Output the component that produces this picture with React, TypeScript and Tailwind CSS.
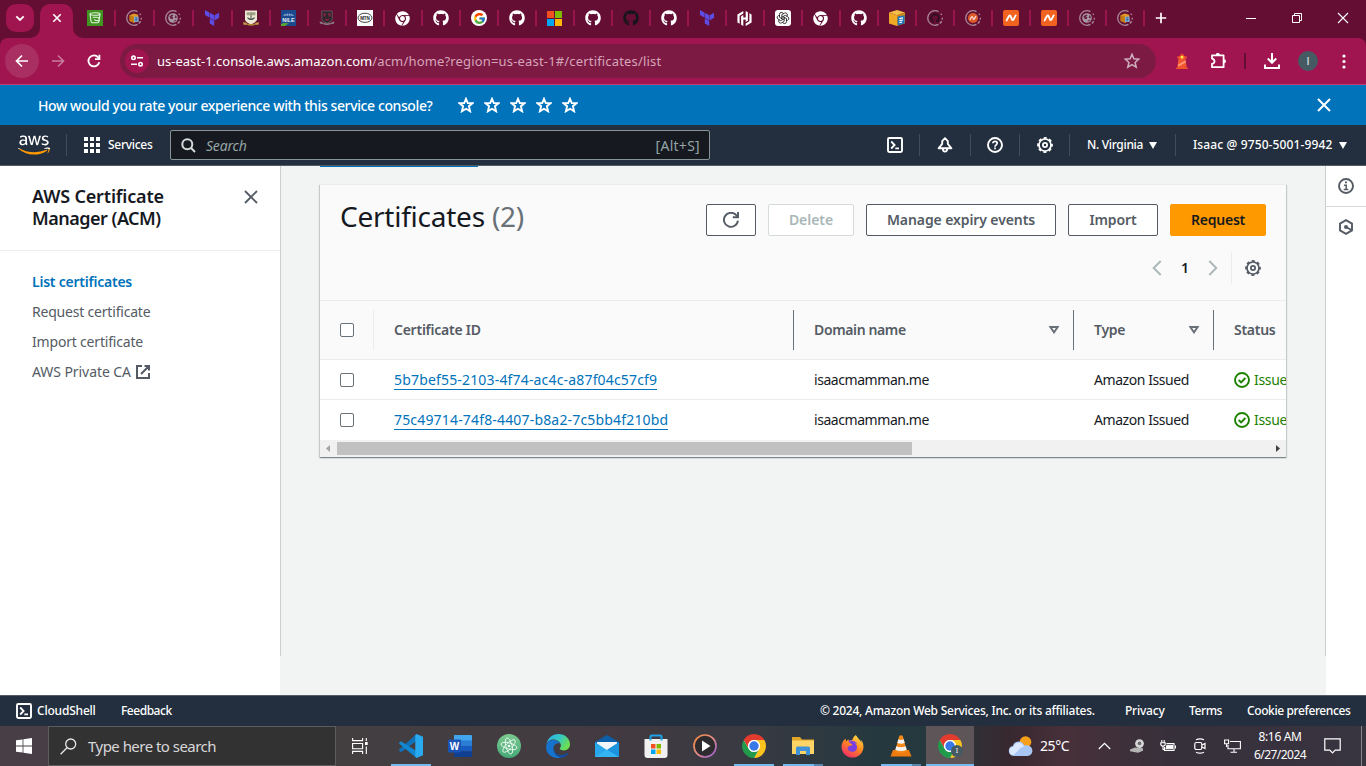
import type { ReactNode } from 'react'
import { FaAws, FaChrome, FaFirefoxBrowser, FaGithub } from 'react-icons/fa'
import { FcGoogle } from 'react-icons/fc'
import { SiHashicorp, SiTerraform } from 'react-icons/si'
import { TbBrandOpenai } from 'react-icons/tb'

/* ---------- browser tab favicons ---------- */

function Ring({ children }: { children: ReactNode }) {
  return (
    <svg className="size-4" viewBox="0 0 16 16" fill="none">
      <circle cx="8" cy="8" r="7.3" stroke="#a98a9a" strokeWidth="1.3" strokeDasharray="3 1.600 3 1.600 3 1.600 30" strokeDashoffset="6" />
      {children}
    </svg>
  )
}

function GlobeRing() {
  return (
    <Ring>
      <circle cx="8" cy="8" r="4.8" fill="#a898a2" />
      <path d="M4.400 6.600Q5.500 4.600 7.600 4.400L8.600 5.400 7 6.600 8.400 7.600 7.600 9.200 5.400 8.800zM10.200 5l1.600 1.700-.5 1.700-1.500-.6zM8.200 11.200l2.600-1.600.3.900-1.400 1.100z" fill="#6b2347" />
    </Ring>
  )
}

function AwsBoxRing() {
  return (
    <Ring>
      <path d="M3.600 5.200L7.800 3.400l4.400 1.400v6.400l-4.200 1.600-4.400-1.800z" fill="#e39a25" />
      <path d="M3.600 5.200l4.200 1.400v6.200l-4.200-1.800z" fill="#c47a12" />
      <rect x="8" y="6.600" width="4.600" height="5.400" fill="#7fa9d6" />
      <path d="M9.300 8h2M9.300 9.400h2M9.300 10.800h1.400" stroke="#1f4f86" strokeWidth=".8" />
    </Ring>
  )
}

function AwsBox() {
  return (
    <svg className="size-4" viewBox="0 0 16 16">
      <path d="M0 2.600L8 0l8 2.400-8 2.800z" fill="#f5c04a" />
      <path d="M0 2.600l8 2.600V16l-8-2.400z" fill="#f0a925" />
      <path d="M8 5.200l8-2.800v10.900L8 16z" fill="#d48a16" />
      <path d="M8.600 6.600l7-1.400v8.400l-7 1.800z" fill="#2275b8" />
      <path d="M10.400 8l3.600-.7v1.300l-3.600.7zM10.400 10.100l3.600-.7v1.200l-3.600.7zM10.400 12.100l2.600-.5v1.200l-2.600.5z" fill="#fff" />
    </svg>
  )
}

function Namecheap({ size }: { size: string }) {
  return (
    <svg className={size} viewBox="0 0 16 16">
      <rect width="16" height="16" rx="2" fill="#f1631f" />
      <path d="M3.600 10.400L6 6q.8-1.200 1.600 0l1.300 3.400q.8 1.300 1.600 0l2.200-4" fill="none" stroke="#fff" strokeWidth="1.900" strokeLinecap="round" strokeLinejoin="round" />
    </svg>
  )
}

function BucketGreen() {
  return (
    <svg className="size-4" viewBox="0 0 16 16" fill="none">
      <rect width="16" height="16" fill="#3f9321" />
      <ellipse cx="8" cy="4" rx="5" ry="1.300" stroke="#e8f5e2" strokeWidth="1.100" />
      <path d="M3 4.200l1.200 7.600q.1 1 1 1h5.600q.9 0 1-1L13 4.200M5.500 7.200H10q2 .2 2 2M7 9.700q3 1.500 5.800.9" stroke="#e8f5e2" strokeWidth="1.100" />
    </svg>
  )
}

function Crest() {
  return (
    <svg className="size-4" viewBox="0 0 16 16">
      <path d="M2 .6h12v8.600q0 3-6 5.200Q2 12.200 2 9.200z" fill="#ece8d2" />
      <path d="M3.600 2.200h3.600v3H3.600zM8.800 2.200h3.600v3H8.800z" fill="#a3a184" />
      <path d="M4.500 7q3.500 3 7 0v1.600q-3.500 3-7 0z" fill="#3b4a46" />
      <path d="M7.400 2.200h1.200v6H7.400z" fill="#66705e" />
      <path d="M0 12.200l3.400.6 1 2H.6zM16 12.200l-3.400.6-1 2h3.800z" fill="#c8a544" />
      <path d="M4.200 13.600q3.800 1.400 7.600 0v1.500q-3.800 1.200-7.600 0z" fill="#b08d2e" />
    </svg>
  )
}

function DarkCrest() {
  return (
    <svg className="size-4" viewBox="0 0 16 16">
      <path d="M2.800 1h10.400v8q0 2.600-5.200 4.200Q2.800 11.600 2.800 9z" fill="#2c2529" stroke="#6d6067" strokeWidth=".8" />
      <path d="M4.400 3h2.400v3.400H4.400zM9.200 3h2.400v3.400H9.200z" fill="#7b2343" />
      <path d="M6 8.200q2 1.400 4 0v2q-2 1.200-4 0z" fill="#7b2343" />
      <path d="M.6 11.400l2.800.8 1 2-3.400-.6zM15.400 11.400l-2.800.8-1 2 3.400-.6zM4.400 12.800q3.600 1.600 7.200 0v1.400q-3.600 1.400-7.200 0z" fill="#8c8388" />
    </svg>
  )
}

function Nile() {
  return (
    <svg className="h-4 w-[15px]" viewBox="0 0 15 16">
      <rect width="15" height="16" fill="#1c4a8f" />
      <path d="M2 5.800C4 2.600 11 2.600 13 5.800z" fill="#8fabd4" />
      <path d="M5.300 3v3M7.500 2.600v3.400M9.700 3v3" stroke="#1c4a8f" strokeWidth=".6" />
      <text x="7.500" y="11.800" textAnchor="middle" className="font-['Liberation_Sans'] text-[5.500px] font-bold" fill="#e6ecf5">NILE</text>
      <path d="M0 16v-2q3-1.600 8-.6Q5 14.600 4 16z" fill="#5aa832" />
    </svg>
  )
}

function Mtn() {
  return (
    <svg className="size-4" viewBox="0 0 16 16">
      <rect width="16" height="16" fill="#fbfbfb" />
      <ellipse cx="8" cy="7.800" rx="7" ry="4.600" fill="none" stroke="#333" strokeWidth=".9" />
      <text x="8" y="9.500" textAnchor="middle" className="font-['Liberation_Sans'] text-[4.500px] font-bold" fill="#222">MTN</text>
    </svg>
  )
}

function Microsoft({ className }: { className: string }) {
  return (
    <svg className={className} viewBox="0 0 15 15">
      <path d="M0 0h7v7H0z" fill="#f35022" />
      <path d="M8 0h7v7H8z" fill="#80bb03" />
      <path d="M0 8h7v7H0z" fill="#02a5f0" />
      <path d="M8 8h7v7H8z" fill="#ffb902" />
    </svg>
  )
}

const gh = <FaGithub className="size-4 text-white" />
const chromeWhite = <FaChrome className="size-[15px] text-white" />
const terraform = <SiTerraform className="size-4 text-[#5c4ee5]" />

const tabs: { icon: ReactNode; wide?: boolean }[] = [
  { icon: <BucketGreen />, wide: true },
  { icon: <AwsBoxRing />, wide: true },
  { icon: <GlobeRing />, wide: true },
  { icon: terraform, wide: true },
  { icon: <Crest /> },
  { icon: <Nile /> },
  { icon: <DarkCrest /> },
  { icon: <Mtn /> },
  { icon: chromeWhite },
  { icon: gh },
  { icon: <span className="flex size-4 items-center justify-center rounded-full bg-white"><FcGoogle className="size-[13px]" /></span> },
  { icon: gh },
  { icon: <Microsoft className="size-[15px]" /> },
  { icon: gh },
  { icon: <FaGithub className="size-4 text-[#17141a]" /> },
  { icon: gh },
  { icon: terraform },
  { icon: <SiHashicorp className="size-[15px] text-white" /> },
  { icon: <span className="flex size-4 items-center justify-center rounded-[3px] bg-white"><TbBrandOpenai className="size-[14px] text-[#222] [&_path]:stroke-[1.500]" /></span> },
  { icon: chromeWhite },
  { icon: gh },
  { icon: <AwsBox /> },
  { icon: <Ring><FaGithub x="3" y="3" size={10} color="#2b0f20" /></Ring> },
  { icon: <Ring><circle cx="8" cy="8" r="5" fill="#dd5a2a" /><path d="M5.200 9.500l1.300-2.600q.5-.7 1 0l.9 2q.5.700 1 0l1.400-2.500" stroke="#f4d9cf" strokeWidth="1.300" strokeLinecap="round" /></Ring> },
  { icon: <Namecheap size="size-4" /> },
  { icon: <Namecheap size="size-4" /> },
  { icon: <GlobeRing /> },
  { icon: <AwsBoxRing /> },
]

function TabStrip() {
  return (
    <div className="flex h-[38px] bg-[#650e33]">
      <div className="flex w-10 pl-1.5 pt-1">
        <span className="flex size-7 items-center justify-center rounded-[10px] bg-[#a0154f]">
          <svg className="size-3" viewBox="0 0 12 12" fill="none" stroke="#fff" strokeWidth="1.800"><path d="M2.300 4.300L6 8l3.700-3.700" /></svg>
        </span>
      </div>
      <div className="relative mt-1 flex h-[34px] w-[33px] justify-center rounded-t-[10px] bg-[#a0154f]">
        <svg className="mt-[9px] size-[10px]" viewBox="0 0 10 10" stroke="#fff" strokeWidth="1.600"><path d="M1.300 1.300l7.400 7.400M8.700 1.300L1.300 8.700" /></svg>
        <svg className="absolute -left-[10px] bottom-0 size-[10px]" viewBox="0 0 10 10" fill="#a0154f"><path d="M10 0v10H0A10 10 0 0 0 10 0z" /></svg>
        <svg className="absolute -right-[10px] bottom-0 size-[10px]" viewBox="0 0 10 10" fill="#a0154f"><path d="M0 0v10h10A10 10 0 0 1 0 0z" /></svg>
      </div>
      <div className="ml-1 flex pt-[10px]">
        {tabs.map((t, i) => (
          <div key={i} className={`flex h-4 items-center border-r-2 border-[#97154c] pl-[10px] ${t.wide ? 'w-[39px]' : 'w-[38px]'}`}>{t.icon}</div>
        ))}
      </div>
      <svg className="ml-[10px] mt-3 size-3 shrink-0" viewBox="0 0 12 12" stroke="#fff" strokeWidth="1.700"><path d="M6 .8v10.400M.8 6h10.400" /></svg>
      <div className="ml-auto flex items-center pb-[2px] pr-[17px] text-white">
        <svg className="size-3" viewBox="0 0 12 12" stroke="currentColor"><path d="M1 6.500h10" /></svg>
        <svg className="ml-[34px] size-3" viewBox="0 0 12 12" fill="none" stroke="currentColor"><path d="M1.500 3.500h7v7h-7zM3.500 3.500v-2h7v7h-2" /></svg>
        <svg className="ml-[34px] size-3" viewBox="0 0 12 12" stroke="currentColor" strokeWidth="1.100"><path d="M1 1l10 10M11 1L1 11" /></svg>
      </div>
    </div>
  )
}

function Toolbar() {
  return (
    <div className="bg-[#650e33]">
      <div className="flex h-[46px] items-center rounded-t-lg bg-[#a0154f] pl-[5px] text-white">
        <span className="flex size-[34px] items-center justify-center rounded-full bg-[#a92e62]">
          <svg className="size-[14px]" viewBox="0 0 14 14" fill="none" stroke="currentColor" strokeWidth="1.700"><path d="M13 7H2M7 1.500L1.500 7 7 12.500" /></svg>
        </span>
        <svg className="ml-3 size-[14px] text-[#c77c9d]" viewBox="0 0 14 14" fill="none" stroke="currentColor" strokeWidth="1.600"><path d="M1 7h11M7 1.500L12.500 7 7 12.500" /></svg>
        <svg className="ml-[22px] size-[14px]" viewBox="0 0 14 14" fill="none" stroke="currentColor" strokeWidth="1.800"><path d="M12.300 8.200A5.500 5.500 0 1 1 11.200 3.400L12.500 4.800" /><path d="M12.400 .8v4.400H8" /></svg>
        <div className="ml-[19px] flex h-[34px] w-[1036px] items-center rounded-full bg-[#7d1a44] pl-[5px] pr-4 font-['Noto_Sans',sans-serif] text-[13px]">
          <span className="flex size-6 items-center justify-center rounded-full bg-[#a0154f]">
            <svg className="size-[14px]" viewBox="0 0 14 14" fill="none" stroke="currentColor" strokeWidth="1.600"><circle cx="3.500" cy="3.800" r="1.700" /><path d="M7 3.800h6M1 10.200h6" /><circle cx="10.500" cy="10.200" r="1.700" /></svg>
          </span>
          <span className="ml-2 mt-[2px] whitespace-nowrap">us-east-1.console.aws.amazon.com</span>
          <span className="mt-[2px] whitespace-nowrap tracking-[0.17px] text-[#d5a5b9]">/acm/home?region=us-east-1#/certificates/list</span>
          <svg className="ml-auto size-4 text-[#cfb1bf]" viewBox="0 0 16 16" fill="none" stroke="currentColor" strokeWidth="1.500"><path d="M8 1.300l1.900 4.500 4.800.4-3.600 3.200 1.100 4.800L8 11.700l-4.200 2.500 1.100-4.800L1.300 6.200l4.800-.4z" /></svg>
        </div>
        <svg className="ml-[19px] h-4 w-[14px]" viewBox="0 0 14 16">
          <path d="M4 3.500L7 .2l3 3.300h1.800v1.800h-1.300l1.200 9.400H13V16H1v-1.300h1.300l1.200-9.400H2.200V3.500z" fill="#f2542d" />
          <path d="M3 11.400L10.600 7.400l.3 2-8 4.400z" fill="#ff9a78" /><rect x="5.700" y="3" width="2.600" height="2.500" fill="#ffe14a" />
        </svg>
        <svg className="ml-[21px] h-[18px] w-[17px]" viewBox="0 0 17 18" fill="none" stroke="currentColor" strokeWidth="1.800"><path d="M2 3.400h11.600v11.800H2v-3.200q2.500-.6 2.500-2.700T2 6.600z" strokeLinejoin="round" /><path d="M5.800 3a2 2 0 0 1 4 0zM14 7.300a2 2 0 0 1 0 4z" fill="currentColor" stroke="none" /><path d="M6 2.500q1.800-1.800 3.600 0z" fill="currentColor" strokeWidth="1" /></svg>
        <span className="ml-[17px] h-4 w-[2px] bg-[#650e33]" />
        <svg className="ml-[18px] size-4" viewBox="0 0 16 16" fill="none" stroke="currentColor" strokeWidth="2"><path d="M8 0v9M3.800 5.500L8 9.800l4.200-4.300M1 11.500V15h14v-3.500" /></svg>
        <span className="ml-[18px] flex size-5 items-center justify-center rounded-full bg-[#465a64] font-['Liberation_Sans',sans-serif] text-[11px] text-[#e4eaec]">I</span>
        <svg className="ml-[24px] h-[15px] w-1" viewBox="0 0 4 15" fill="currentColor"><circle cx="2" cy="2" r="1.600" /><circle cx="2" cy="7.500" r="1.600" /><circle cx="2" cy="13" r="1.600" /></svg>
      </div>
    </div>
  )
}

/* ---------- AWS console ---------- */

function Cross({ className, width }: { className: string; width: number }) {
  return <svg className={className} viewBox="0 0 14 14" stroke="currentColor" strokeWidth={width}><path d="M1 1l12 12M13 1L1 13" /></svg>
}

function Gear({ className }: { className: string }) {
  return (
    <svg className={className} viewBox="0 0 16 16" fill="none" stroke="currentColor">
      <circle cx="8" cy="8" r="7" strokeWidth="1.800" strokeDasharray="3 2.498" strokeDashoffset="1.500" />
      <circle cx="8" cy="8" r="6" strokeWidth="1.700" />
      <circle cx="8" cy="8" r="2.100" strokeWidth="1.800" />
    </svg>
  )
}

function ShellIcon() {
  return (
    <svg className="size-4" viewBox="0 0 16 16" fill="none" stroke="currentColor" strokeWidth="1.900"><rect x="1" y="1" width="14" height="14" rx="1.200" /><path d="M4.200 4.500L7.600 8l-3.400 3.500M8.300 11.300h3.700" strokeWidth="1.800" /></svg>
  )
}

function SurveyBar() {
  return (
    <div className="flex h-[41px] items-center border-t border-[#bd3f74] bg-[#0073bb] pl-[38px] pr-[36px] text-white">
      <span className="w-[395px] whitespace-nowrap text-[14px] font-medium tracking-[-0.39px]">How would you rate your experience with this service console?</span>
      <div className="ml-[25px] flex gap-[10px]">
        {[0, 1, 2, 3, 4].map((i) => (
          <svg key={i} className="size-4" viewBox="0 0 16 16" fill="none" stroke="currentColor" strokeWidth="1.900"><path d="M8 1.800l1.800 4.300 4.700.1-3.600 3 1.200 5.100L8 11.800l-4.100 2.500 1.200-5.100-3.600-3 4.700-.1z" /></svg>
        ))}
      </div>
      <Cross className="ml-auto mr-[-1px] size-[14px]" width={2} />
    </div>
  )
}

function Divider() {
  return <span className="h-[22px] w-px shrink-0 bg-[#414d5c]" />
}

function Caret({ className }: { className: string }) {
  return <svg className={`h-[7px] w-[8px] shrink-0 ${className}`} viewBox="0 0 8 7" fill="currentColor"><path d="M0 0h8L4 7z" /></svg>
}

function TopNav() {
  return (
    <div className="flex h-[41px] items-center border-b border-[#545b64] bg-[#232f3e] text-[12px] font-medium text-white">
      <svg className="size-0"><linearGradient id="awsFill" gradientUnits="userSpaceOnUse" x1="0" y1="0" x2="0" y2="512"><stop offset=".64" stopColor="#fff" /><stop offset=".64" stopColor="#ff9900" /></linearGradient></svg>
      <FaAws className="ml-[18px] h-[26px] w-8 [&_path]:fill-[url(#awsFill)]" />
      <span className="ml-4" /><Divider />
      <svg className="ml-[17px] size-4" viewBox="0 0 16 16" fill="currentColor"><path d="M0 0h4v4H0zM6 0h4v4H6zM12 0h4v4h-4zM0 6h4v4H0zM6 6h4v4H6zM12 6h4v4h-4zM0 12h4v4H0zM6 12h4v4H6zM12 12h4v4h-4z" /></svg>
      <span className="ml-[8px] w-[45px] whitespace-nowrap tracking-[-0.280px]">Services</span>
      <div className="ml-[17px] flex h-[30px] w-[540px] items-center rounded-[2px] border border-[#879596] bg-[#16191f] pl-[10px] pr-[9px] text-[14px] font-normal text-[#95a5a6]">
        <svg className="size-[15px] text-[#d5dbdb]" viewBox="0 0 15 15" fill="none" stroke="currentColor" strokeWidth="2"><circle cx="6.300" cy="6.300" r="5" /><path d="M9.800 9.800l4.200 4.200" /></svg>
        <span className="ml-[10px] italic tracking-[-0.200px]">Search</span>
        <span className="ml-auto tracking-[0.280px]">[Alt+S]</span>
      </div>
      <div className="ml-[177px] flex items-center"><ShellIcon /></div>
      <span className="w-4" /><Divider />
      <svg className="ml-[17px] size-4" viewBox="0 0 16 16" fill="none" stroke="currentColor" strokeWidth="1.900"><path d="M8 1.200L5.200 4.200V6.800L1.600 11.300h12.800l-3.600-4.500V4.200zM5.800 12.200q.4 2.400 2.200 2.400t2.200-2.400" strokeLinejoin="round" /></svg>
      <span className="w-[17px]" /><Divider />
      <svg className="ml-4 size-4" viewBox="0 0 16 16" fill="none" stroke="currentColor" strokeWidth="1.900"><circle cx="8" cy="8" r="7" /><path d="M5.800 6.300c0-2.600 4.400-2.600 4.400 0C10.200 7.800 8 7.900 8 9.800M8 10.600v1.700" strokeWidth="1.700" /></svg>
      <span className="w-4" /><Divider />
      <Gear className="ml-[17px] size-4" />
      <span className="w-4" /><Divider />
      <span className="ml-[17px] w-[56px] whitespace-nowrap tracking-[-0.320px]">N. Virginia</span>
      <Caret className="ml-[6px]" />
      <span className="w-[18px]" /><Divider />
      <span className="ml-[17px] w-[140px] whitespace-nowrap tracking-[0.120px]">Isaac @ 9750-5001-9942</span>
      <Caret className="ml-[6px]" />
    </div>
  )
}

function SideNav() {
  return (
    <div className="w-[280px] shrink-0 bg-white">
      <div className="flex h-[85px] justify-between border-b border-[#eaeded] pl-8 pr-[22px] pt-5">
        <div className="-mt-px text-[18px] font-semibold leading-[22px] text-[#16191f]">
          <div className="whitespace-nowrap tracking-[-0.170px]">AWS Certificate</div>
          <div className="whitespace-nowrap tracking-[-0.500px]">Manager (ACM)</div>
        </div>
        <Cross className="mt-[4px] size-[14px] text-[#545b64]" width={1.900} />
      </div>
      <div className="pl-8 pt-4 text-[14px] leading-[30px] text-[#545b64]">
        <div className="font-semibold tracking-[-0.230px] text-[#0073bb]">List certificates</div>
        <div className="tracking-[-0.200px]">Request certificate</div>
        <div className="tracking-[-0.190px]">Import certificate</div>
        <div className="flex items-center"><span className="w-[104px] tracking-[-0.070px]">AWS Private CA</span>
          <svg className="size-[14px]" viewBox="0 0 14 14" fill="none" stroke="currentColor" strokeWidth="2"><path d="M6 1H1v12h12V8M8.500 1H13v4.500M13 1L5 9" /></svg>
        </div>
      </div>
    </div>
  )
}

function Check() {
  return <span className="block size-[14px] rounded-[2px] border border-[#687078] bg-white" />
}

function SortIcon() {
  return <svg className="ml-auto mr-[14px] h-[8px] w-[10px] text-[#687078]" viewBox="0 0 10 8" fill="none" stroke="currentColor" strokeWidth="1.900"><path d="M1.300 1h7.400L5 6.400z" /></svg>
}

const rows = [
  { id: '5b7bef55-2103-4f74-ac4c-a87f04c57cf9', domain: 'isaacmamman.me', type: 'Amazon Issued', status: 'Issued' },
  { id: '75c49714-74f8-4407-b8a2-7c5bb4f210bd', domain: 'isaacmamman.me', type: 'Amazon Issued', status: 'Issued' },
]

const btn = 'flex h-8 items-center justify-center whitespace-nowrap rounded-[2px] border pb-px text-[14px] font-semibold'

function CertificatesCard() {
  return (
    <div className="mt-[17px] h-[273px] w-[966px] overflow-hidden border-t border-[#eaeded] bg-white shadow-[0_1px_1px_0_rgba(0,28,36,.3),1px_1px_1px_0_rgba(0,28,36,.15),-1px_1px_1px_0_rgba(0,28,36,.15)]">
      <div className="h-[116px] border-b border-[#eaeded] bg-[#fafafa] px-5 pt-[19px]">
        <div className="flex gap-3">
          <h1 className="mr-auto mt-[-5px] whitespace-nowrap text-[28px] leading-[34px] tracking-[-0.240px] text-[#16191f]">Certificates <span className="text-[#687078]">(2)</span></h1>
          <div className={`${btn} w-[50px] border-[#545b64] bg-white text-[#545b64]`}>
            <svg className="mt-px size-4" viewBox="0 0 16 16" fill="none" stroke="currentColor" strokeWidth="1.900"><path d="M14.900 8.600A7 7 0 1 1 13.200 3.200L15 5.200" /><path d="M15 0v5.200H9.800" /></svg>
          </div>
          <div className={`${btn} w-[86px] border-[#d5dbdb] bg-white tracking-[-0.050px] text-[#aab7b8]`}>Delete</div>
          <div className={`${btn} w-[190px] border-[#545b64] bg-white tracking-[-0.100px] text-[#545b64]`}>Manage expiry events</div>
          <div className={`${btn} w-[90px] border-[#545b64] bg-white tracking-[-0.150px] text-[#545b64]`}>Import</div>
          <div className={`${btn} w-24 border-[#ff9900] bg-[#ff9900] tracking-[-0.220px] text-[#16191f]`}>Request</div>
        </div>
        <div className="mt-4 flex h-8 items-center justify-end text-[#aab7b8]">
          <svg className="h-4 w-[10px]" viewBox="0 0 10 16" fill="none" stroke="currentColor" strokeWidth="1.900"><path d="M8.700 1L1.700 8l7 7" /></svg>
          <span className="mx-[19px] w-2 pb-px text-center text-[14px] font-semibold text-[#16191f]">1</span>
          <svg className="h-4 w-[10px]" viewBox="0 0 10 16" fill="none" stroke="currentColor" strokeWidth="1.900"><path d="M1.300 1l7 7-7 7" /></svg>
          <span className="ml-[13px] mr-[13px] h-8 w-px bg-[#eaeded]" />
          <Gear className="mr-[5px] size-4 text-[#545b64]" />
        </div>
      </div>
      <div className="grid h-[59px] w-[1100px] grid-cols-[54px_420px_280px_140px_206px] items-center border-b border-[#eaeded] bg-[#fafafa] text-[14px] font-semibold leading-10 text-[#545b64]">
        <div className="flex h-10 items-center border-r border-[#eaeded] pl-5"><Check /></div>
        <div className="h-10 border-r border-[#687078] pl-5 tracking-[-0.250px]">Certificate ID</div>
        <div className="flex h-10 items-center border-r border-[#687078] pl-5 tracking-[-0.370px]">Domain name<SortIcon /></div>
        <div className="flex h-10 items-center border-r border-[#687078] pl-5 tracking-[-0.250px]">Type<SortIcon /></div>
        <div className="pl-5 tracking-[-0.280px]">Status</div>
      </div>
      {rows.map((r, i) => (
        <div key={r.id} className={`grid h-10 w-[1100px] grid-cols-[54px_420px_280px_140px_206px] items-center border-b text-[14px] text-[#16191f] ${i === 0 ? 'border-[#eaeded]' : 'border-white'}`}>
          <div className="pl-5"><Check /></div>
          <div className="pl-5"><span className="inline-block whitespace-nowrap border-b border-[#0073bb] leading-[18px] tracking-[0.170px] text-[#0073bb]">{r.id}</span></div>
          <div className="pl-5 tracking-[-0.440px]">{r.domain}</div>
          <div className="pl-5 tracking-[-0.430px]">{r.type}</div>
          <div className="flex items-center pl-5 tracking-[-0.300px] text-[#1d8102]">
            <svg className="mr-1 size-4" viewBox="0 0 16 16" fill="none" stroke="currentColor" strokeWidth="1.900"><circle cx="8" cy="8" r="7" /><path d="M4.700 8l2.400 2.500L11.400 6" /></svg>
            {r.status}
          </div>
        </div>
      ))}
      <div className="flex h-[17px] items-center bg-[#f1f1f1] px-[6px]">
        <svg className="h-[7px] w-[4px]" viewBox="0 0 4 7" fill="#a3a3a3"><path d="M4 0v7L0 3.500z" /></svg>
        <span className="ml-[7px] h-[13px] w-[575px] bg-[#c1c1c1]" />
        <svg className="ml-auto h-[7px] w-[4px]" viewBox="0 0 4 7" fill="#404040"><path d="M0 0v7l4-3.500z" /></svg>
      </div>
    </div>
  )
}

function Content() {
  return (
    <div className="flex h-[529px] bg-white">
      <SideNav />
      <div className="flex w-[1046px] shrink-0 bg-[#f2f3f3]">
        <div className="h-[490px] w-px bg-[#c9cfd0]" />
        <div className="ml-[39px]">
          <div className="h-px w-[158px] bg-[#0073bb]" />
          <CertificatesCard />
        </div>
        <div className="ml-auto h-[490px] w-px bg-[#c9cfd0]" />
      </div>
      <div className="flex flex-1 flex-col items-center text-[#545b64]">
        <div className="flex h-[41px] w-full items-center justify-center border-b border-[#d5dbdb]">
          <svg className="size-4" viewBox="0 0 16 16" fill="none" stroke="currentColor" strokeWidth="1.900"><circle cx="8" cy="8" r="7" /><path d="M7 3.500h2v1.800H7z" fill="currentColor" stroke="none" /><path d="M6 7.300h2.200v4M5.700 11.600h4.600" strokeWidth="1.500" /></svg>
        </div>
        <svg className="mt-3 size-4" viewBox="0 0 16 16" fill="none" stroke="currentColor" strokeWidth="1.900"><path d="M8 1.200l6 3.400v6.800l-6 3.400-6-3.400V4.600z" /><circle cx="8" cy="8" r="2" fill="currentColor" stroke="none" /><path d="M8 8l5.500 3" /></svg>
      </div>
    </div>
  )
}

function Footer() {
  return (
    <div className="flex h-[31px] items-center whitespace-nowrap border-t border-[#545b64] bg-[#232f3e] pl-4 text-[12px] font-medium text-white">
      <ShellIcon />
      <span className="ml-[5px] w-[84px] tracking-[-0.200px]">CloudShell</span>
      <span className="tracking-[-0.480px]">Feedback</span>
      <span className="ml-auto w-[305px] tracking-[-0.240px]">© 2024, Amazon Web Services, Inc. or its affiliates.</span>
      <span className="w-[64px] tracking-[-0.220px]">Privacy</span>
      <span className="w-[58px] tracking-[-0.410px]">Terms</span>
      <span className="w-[119px] tracking-[-0.390px]">Cookie preferences</span>
    </div>
  )
}

/* ---------- desktop taskbar ---------- */

function ChromeColor() {
  const d = 'M12 6h10.390A12 12 0 0 0 1.610 6L6.800 15A6 6 0 0 1 12 6z'
  return (
    <svg className="size-6" viewBox="0 0 24 24">
      <circle cx="12" cy="12" r="11" fill="#fff" />
      <path d={d} fill="#e33b2e" />
      <path d={d} fill="#fcc31e" transform="rotate(120 12 12)" />
      <path d={d} fill="#229a4b" transform="rotate(240 12 12)" />
      <circle cx="12" cy="12" r="5.900" fill="#fff" /><circle cx="12" cy="12" r="4.700" fill="#3b78e7" />
    </svg>
  )
}

function VsCode() {
  return (
    <svg className="size-6" viewBox="0 0 24 24">
      <path d="M17.500 0v7L2 18.300.2 16.900v-1.300z" fill="#0f72b8" />
      <path d="M.2 8.500L2 7.300 17.500 17v7L.2 9.800z" fill="#1286cf" />
      <path d="M17.500 0L24 2.800v18.400L17.500 24l-1.200-1.200V1.200z" fill="#29a9f0" />
    </svg>
  )
}

function Word() {
  return (
    <svg className="h-[22px] w-6" viewBox="0 0 24 22">
      <path d="M6 0h17q1 0 1 1v5H6z" fill="#41a5ee" /><path d="M6 5.500h18V11H6z" fill="#2b7cd3" /><path d="M6 11h18v5.500H6z" fill="#185abd" /><path d="M6 16.500h18V21q0 1-1 1H6z" fill="#103f91" />
      <rect y="4.500" width="13" height="13" rx="1" fill="#1b52b5" />
      <text x="6.500" y="14.600" textAnchor="middle" className="font-['Liberation_Sans'] text-[10px] font-bold" fill="#fff">W</text>
    </svg>
  )
}

function Atom() {
  return (
    <svg className="size-6" viewBox="0 0 24 24">
      <linearGradient id="atomBg" x1="0" y1="0" x2="0" y2="1"><stop stopColor="#7cc98f" /><stop offset="1" stopColor="#45a877" /></linearGradient>
      <circle cx="12" cy="12" r="12" fill="url(#atomBg)" />
      <g fill="none" stroke="#eef8f1" strokeWidth=".9"><ellipse cx="12" cy="12" rx="8.300" ry="3.100" transform="rotate(15 12 12)" /><ellipse cx="12" cy="12" rx="8.300" ry="3.100" transform="rotate(75 12 12)" /><ellipse cx="12" cy="12" rx="8.300" ry="3.100" transform="rotate(135 12 12)" /></g>
      <circle cx="12" cy="12" r="1.300" fill="#fff" />
    </svg>
  )
}

function Edge() {
  return (
    <svg className="size-6" viewBox="0 0 24 24">
      <linearGradient id="edgeTop" x1="0" x2="1" y1="0" y2=".5"><stop offset=".1" stopColor="#2ab4e8" /><stop offset=".55" stopColor="#36c8c4" /><stop offset="1" stopColor="#6cdf4f" /></linearGradient>
      <path d="M.3 11C1.500 3.500 7 0 12.200 0 19.500 0 24 5 24 10.300c0 4-3 6.200-6 6.200-2.600 0-4.300-1-4.300-1.900 0-.7 1.200-1.200 1.200-3.100C14.900 8 11 5.600 7.200 5.600 3.500 5.600 1 8 .3 11z" fill="url(#edgeTop)" />
      <path d="M.1 12.500C.6 8 3.600 6 7.200 6c3 0 6 1.500 7 3.800-1-.9-3.600-.9-5.200.8-2.900 3.200-1.600 9.400 3.700 12.200.8.500 2 .8 2.600.9C7.500 25.400-.5 20.600.1 12.500z" fill="#1674cf" />
      <path d="M8.300 12c-1.300 5.500 2.400 9.300 7 9 2.700-.2 5-1.300 6.300-2.200.6-.3 1 .2.700.7-1.600 2.400-4.300 4-7.200 4.300C9.500 22.500 6.500 16.500 8.300 12z" fill="#134c9c" />
    </svg>
  )
}

function Mail() {
  return (
    <svg className="h-[22px] w-6" viewBox="0 0 24 22">
      <path d="M0 7L12 0l12 7v2H0z" fill="#0d5fa9" />
      <path d="M2 7h20v6L12 17 2 13z" fill="#f2f6fa" />
      <path d="M0 7l14 9.500L24 22H0z" fill="#28a8ea" /><path d="M24 7L11 15.500 24 22z" fill="#1c94dd" /><path d="M12 14.800L24 22H0z" fill="#35b5f2" />
    </svg>
  )
}

function Store() {
  return (
    <svg className="size-6" viewBox="0 0 24 24">
      <path d="M6.500 6V2.700q0-1.200 1.200-1.200h8.600q1.200 0 1.200 1.200V6" fill="none" stroke="#1da1e8" strokeWidth="2" />
      <path d="M.5 5h23v16q0 3-3 3h-17q-3 0-3-3z" fill="#f1f1f1" />
      <path d="M5.500 5h2v1.500h-2zM16.500 5h2v1.500h-2z" fill="#1da1e8" />
      <path d="M7 10h4.500v4.500H7z" fill="#f25022" /><path d="M12.500 10H17v4.500h-4.500z" fill="#7fba00" /><path d="M7 15.500h4.500V20H7z" fill="#00a4ef" /><path d="M12.500 15.500H17V20h-4.500z" fill="#ffb900" />
    </svg>
  )
}

function Media() {
  return (
    <svg className="size-6" viewBox="0 0 24 24">
      <linearGradient id="mediaRing" x1="0" y1="0" x2="1" y2="1"><stop stopColor="#f08a3c" /><stop offset=".5" stopColor="#e58b86" /><stop offset="1" stopColor="#8f5bd6" /></linearGradient>
      <circle cx="12" cy="12" r="11" fill="#2d2b2e" stroke="url(#mediaRing)" strokeWidth="1.700" /><path d="M9 6.500l8.500 5.500L9 17.500z" fill="#fff" />
    </svg>
  )
}

function Explorer() {
  return (
    <svg className="h-[20px] w-[22px]" viewBox="0 0 22 20">
      <path d="M0 1h8l2 2.500h12V18H0z" fill="#e0a526" /><path d="M0 4.500h22V18H0z" fill="#ffd467" />
      <path d="M4 19v-7q0-1.500 1.500-1.500h11q1.500 0 1.500 1.500v7h-4v-4H8v4z" fill="#3f92d8" />
    </svg>
  )
}

function Firefox() {
  return (
    <span className="flex">
      <svg className="size-0"><linearGradient id="ffFill" x1=".8" y1="0" x2=".2" y2="1"><stop stopColor="#ffe14a" /><stop offset=".45" stopColor="#ff8a1f" /><stop offset="1" stopColor="#f0246e" /></linearGradient></svg>
      <span className="flex size-6 items-center justify-center bg-[radial-gradient(circle_at_50%_54%,#7a3fe0_0_7px,transparent_7.500px)]">
        <FaFirefoxBrowser className="size-[23px] [&_path]:fill-[url(#ffFill)]" />
      </span>
    </span>
  )
}

function Vlc() {
  return (
    <svg className="size-[22px]" viewBox="0 0 22 22">
      <path d="M3 15h16l2.500 6.500H.5z" fill="#f07b0e" /><path d="M9.300.8q1.700-1 3.400 0L17 16.500q-6 3-12 0z" fill="#f58a1a" />
      <path d="M8.300 4.300q2.700 1.200 5.400 0l1 3.700q-3.700 1.400-7.400 0zM6.300 11.300q4.700 2 9.400 0l1 3.400q-5.700 2.400-11.400 0z" fill="#f4f4f4" />
    </svg>
  )
}

const apps: { icon: ReactNode; bar: string }[] = [
  { icon: <VsCode />, bar: 'one' },
  { icon: <Word />, bar: '' },
  { icon: <Atom />, bar: '' },
  { icon: <Edge />, bar: '' },
  { icon: <Mail />, bar: '' },
  { icon: <Store />, bar: '' },
  { icon: <Media />, bar: '' },
  { icon: <ChromeColor />, bar: 'one' },
  { icon: <Explorer />, bar: 'many' },
  { icon: <Firefox />, bar: '' },
  { icon: <Vlc />, bar: 'many' },
]

function Taskbar() {
  return (
    <div className="flex h-10 overflow-hidden bg-[linear-gradient(90deg,#483f46_0%,#433f41_25%,#423a40_45%,#383a42_55%,#26383f_64%,#25393d_68%,#38282f_74%,#47303a_78%,#36303a_86%,#383440_100%)] font-['Noto_Sans',sans-serif] text-white">
      <div className="flex w-12 items-center justify-center">
        <svg className="size-4" viewBox="0 0 16 16" fill="#fff"><path d="M0 2.300L6.600 1.400v6.200H0zM7.400 1.300L16 0v7.600H7.400zM0 8.400h6.600v6.200L0 13.700zM7.400 8.400H16V16l-8.600-1.300z" /></svg>
      </div>
      <div className="flex w-[288px] items-center border border-[#5f5c5d] bg-[#333233] pl-[11px]">
        <svg className="size-[17px]" viewBox="0 0 17 17" fill="none" stroke="#e8e8e8" strokeWidth="1.300"><circle cx="10.700" cy="6" r="5" /><path d="M7 9.700L.6 16.200" /></svg>
        <span className="ml-[11px] whitespace-nowrap text-[15px] tracking-[-0.530px] text-[#d8d8d8]">Type here to search</span>
      </div>
      <div className="flex w-[51px] items-center justify-start pl-[16px]">
        <svg className="size-4" viewBox="0 0 16 16" fill="none" stroke="#fff" strokeWidth="1.100"><path d="M.6 0v2.600h10V0M.6 16v-2.600h10V16M.6 5.500h10v5.200H.6zM14.300 0v3M14.300 8.500V16" /><path d="M13 4h2.700v3H13z" fill="#fff" stroke="none" /></svg>
      </div>
      {apps.map((a, i) => (
        <div key={i} className="flex w-[49px] flex-col pr-px">
          <div className="flex h-[38px] items-center justify-center pt-[2px]">{a.icon}</div>
          {a.bar === 'one' && <span className="mx-1 h-[2px] bg-[#76b9ed]" />}
          {a.bar === 'many' && <span className="mx-1 flex h-[2px] bg-[#5686ad]"><span className="mr-px w-[31px] bg-[#76b9ed]" /></span>}
        </div>
      ))}
      <div className="flex w-12 flex-col bg-[#5e5559]">
        <div className="flex h-[38px] items-center justify-center pt-[2px]">
          <span className="relative">
            <ChromeColor />
            <span className="absolute -right-px bottom-px flex size-[12px] items-center justify-center rounded-full bg-[#465a64] text-[7px]">I</span>
          </span>
        </div>
        <span className="h-[2px] bg-[#76b9ed]" />
      </div>
      <div className="flex flex-1 items-center">
        <svg className="ml-[34px] h-5 w-[25px]" viewBox="0 0 25 20">
          <circle cx="17.500" cy="6" r="5.800" fill="#f7a01c" />
          <path d="M5.500 20a5 5 0 0 1-.6-9.900C5.500 7 8 5.500 10.600 5.500c3 0 5 1.700 5.800 4 4-1.200 8 1.200 8 5.300 0 3-2.300 5.200-5 5.200z" fill="#a9c7f5" />
          <path d="M5.500 19a4 4 0 0 1 0-8c.6-3 3-4.300 5.200-4.300 3 0 4.600 2 5.200 4.400-3 0-5 1.900-6 3.900z" fill="#dbe8fd" />
        </svg>
        <span className="ml-[7px] w-[30px] whitespace-nowrap pb-px text-[14px] tracking-[-0.400px]">25°C</span>
        <svg className="ml-[28px] h-[8px] w-[13px]" viewBox="0 0 13 8" fill="none" stroke="#fff" strokeWidth="1.300"><path d="M.8 7l5.700-5.700L12.200 7" /></svg>
        <svg className="ml-[19px] h-[14px] w-[15px]" viewBox="0 0 15 14"><circle cx="9.500" cy="4.600" r="4.400" fill="#d7d7d7" /><circle cx="9.500" cy="4.400" r="1.800" fill="#6b6b6b" /><path d="M0 10.500L5 8.400l8 .8v2.600L8 13.800l-8-1.500z" fill="#b4b4b4" /></svg>
        <svg className="ml-[15px] h-[12px] w-[16px]" viewBox="0 0 16 12" fill="none" stroke="#fff" strokeWidth="1.100"><path d="M6.500 3.500H14v7H4.500V7" /><path d="M7 5.200h5.500v3.600H6z" fill="#fff" /><path d="M15.500 5.500v3M.8 2.800h4.400v2Q3 7.500.8 4.800zM1.800 0v2.800M4.200 0v2.800M3 6v3.500h1.500" /></svg>
        <svg className="ml-[18px] h-4 w-[12px]" viewBox="0 0 12 16" fill="none" stroke="#fff" strokeWidth="1.200"><rect x=".8" y="4.500" width="7" height="7" rx="1.500" /><path d="M8 7l3-1.500v5L8 9M2 1.800q4-2 8 0M2 14.200q4 2 8 0" /></svg>
        <svg className="ml-[18px] h-[14px] w-[17px]" viewBox="0 0 17 14" fill="none" stroke="#fff" strokeWidth="1.100"><path d="M6 2.500h10.400v7.300H4V6M10 10v3M6.500 13.300H13M.6 1h4v3.800h-4zM2.600 4.800V8" /></svg>
        <div className="ml-[12px] w-[54px] text-center text-[12px] leading-[18px]">
          <div className="whitespace-nowrap tracking-[-0.350px]">8:16 AM</div>
          <div className="whitespace-nowrap tracking-[-0.550px]">6/27/2024</div>
        </div>
        <svg className="ml-[17px] h-4 w-[17px]" viewBox="0 0 17 16" fill="none" stroke="#fff" strokeWidth="1.200"><path d="M.8.800h15.400v11.400h-5L8.500 15l-2.700-2.800h-5z" /></svg>
      </div>
      <span className="mr-[4px] w-px bg-[#8b868e]" />
    </div>
  )
}

export default function App() {
  return (
    <div className="h-[766px] w-[1366px] overflow-hidden font-['Noto_Sans',sans-serif]">
      <TabStrip />
      <Toolbar />
      <SurveyBar />
      <TopNav />
      <Content />
      <Footer />
      <Taskbar />
    </div>
  )
}
